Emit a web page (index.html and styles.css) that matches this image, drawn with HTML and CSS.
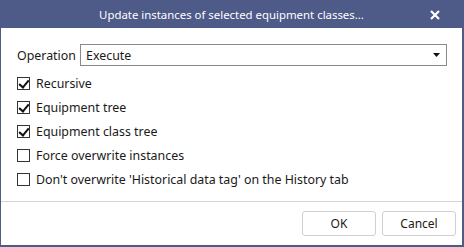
FILE: index.html
```html
<!DOCTYPE html>
<html lang="en">
<head>
    <meta charset="UTF-8">
    <title>Update instances</title>
    <link rel="stylesheet" href="styles.css">
</head>
<body>
    <div class="dialog">
        <div class="titlebar">
            <span class="title">Update instances of selected equipment classes...</span>
            <span class="close">
                <svg viewBox="0 0 10 10" width="10" height="10">
                    <path d="M1 1L9 9M9 1L1 9" stroke="#fff" stroke-width="2.2" />
                </svg>
            </span>
        </div>

        <div class="content">
            <div class="field">
                <span class="label">Operation</span>
                <div class="select">
                    <span>Execute</span>
                    <svg class="arrow" viewBox="0 0 7 4" width="7" height="4">
                        <path d="M0 0H7L3.5 4Z" fill="#111" />
                    </svg>
                </div>
            </div>

            <label class="check"><span class="box checked"></span>Recursive</label>
            <label class="check"><span class="box checked"></span>Equipment tree</label>
            <label class="check"><span class="box checked"></span>Equipment class tree</label>
            <label class="check"><span class="box"></span>Force overwrite instances</label>
            <label class="check"><span class="box"></span>Don't overwrite 'Historical data tag' on the History tab</label>
        </div>

        <div class="footer">
            <button class="btn">OK</button>
            <button class="btn">Cancel</button>
        </div>
    </div>
</body>
</html>
```

FILE: styles.css
```css
* {
    margin: 0;
    padding: 0;
    box-sizing: border-box;
}

body {
    font-family: 'Noto Sans', 'Open Sans', sans-serif;
    font-size: 12.4px;
    color: #1a1a1a;
    background: #ffffff;
}

.dialog {
    width: 464px;
    height: 247px;
    display: flex;
    flex-direction: column;
    background: #ffffff;
    border: 1px solid #4e5a88;
    border-right-width: 2px;
    border-bottom-width: 2px;
}

.titlebar {
    height: 27px;
    background: #4e5a88;
    color: #ffffff;
    display: flex;
    align-items: center;
    justify-content: center;
    position: relative;
    font-size: 11.4px;
}

.title {
    margin-top: -1px;
}

.close {
    position: absolute;
    right: 22px;
    top: 9px;
    display: flex;
}

.content {
    flex: 1;
    padding: 16px 15px 0 16px;
    display: flex;
    flex-direction: column;
}

.field {
    display: flex;
    align-items: center;
    margin-bottom: 5px;
}

.label {
    width: 63px;
}

.select {
    flex: 1;
    height: 22px;
    border: 1px solid #8a8a8a;
    display: flex;
    align-items: center;
    justify-content: space-between;
    padding: 0 6px 0 5px;
}

.check {
    display: flex;
    align-items: center;
    height: 24px;
}

.box {
    width: 13px;
    height: 13px;
    border: 1px solid #333333;
    margin-right: 6px;
    position: relative;
}

.box.checked::after {
    content: "";
    position: absolute;
    left: 3px;
    top: 0px;
    width: 4px;
    height: 8px;
    border: solid #111111;
    border-width: 0 2.5px 2.5px 0;
    transform: rotate(40deg);
}

.footer {
    border-top: 1px solid #d4d4d4;
    height: 44px;
    display: flex;
    justify-content: flex-end;
    align-items: center;
    gap: 6px;
    padding-right: 6px;
}

.btn {
    width: 74px;
    height: 25px;
    background: #ffffff;
    border: 1px solid #d0d0d0;
    border-radius: 3px;
    font-family: inherit;
    font-size: 12px;
    color: #1a1a1a;
}
```
